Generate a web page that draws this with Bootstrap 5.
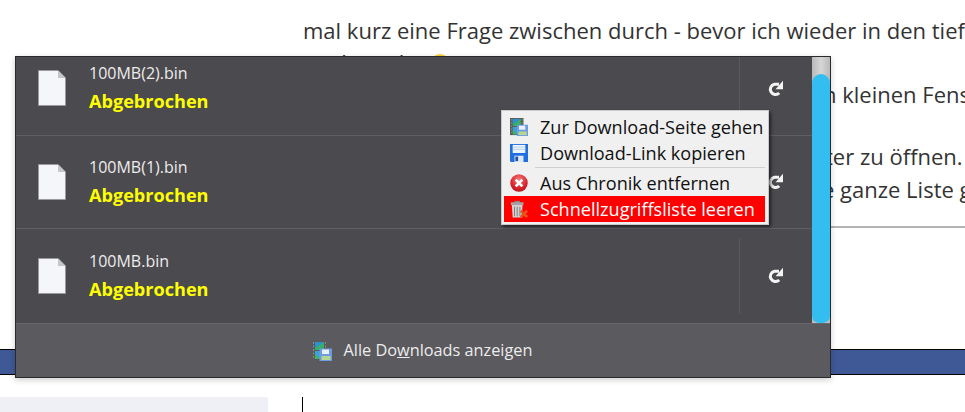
<!DOCTYPE html>
<html lang="de">
<head>
  <meta charset="UTF-8">
  <meta name="viewport" content="width=device-width, initial-scale=1.0">
  <title>Downloads</title>
  <link href="https://cdn.jsdelivr.net/npm/bootstrap@5.3.0/dist/css/bootstrap.min.css" rel="stylesheet">
  <style>
    body { width: 965px; height: 412px; overflow: hidden; background: #fff; position: relative; font-family: "Open Sans", sans-serif; }

    /* page behind the popup */
    .page-top { height: 349px; padding-left: 303px; overflow: hidden; }
    .post-line { font-size: 22px; color: #333; white-space: nowrap; line-height: 28px; margin: 0; }
    .post-line.first { padding-top: 16px; }
    .post-line.second { padding-top: 4px; padding-left: 26px; }
    .post-line.third { padding-top: 4px; padding-left: 520px; }
    .post-line.fourth { padding-top: 34px; padding-left: 522px; }
    .post-line.fifth { padding-top: 5px; padding-left: 519px; }
    .post-rule { height: 2px; background: #b5b5b5; margin: 23px 0 0 0; }
    .smiley { display: inline-block; width: 20px; height: 20px; border-radius: 50%; background: #f7d33d; vertical-align: -3px; }
    .blue-bar { height: 26px; background: #3f5896; border-top: 1px solid #000; border-bottom: 1px solid #000; }
    .page-bottom { height: 37px; padding-top: 22px; }
    .side-box { width: 268px; height: 15px; background: #eff0f6; border-radius: 0 2px 0 0; }
    .caret-line { width: 1px; height: 15px; background: #000; margin-left: 34px; }

    /* download popup */
    .dl-panel { position: absolute; left: 15px; top: 56px; width: 816px; height: 322px; background: #4b4a4f; border: 1px solid #2b2b2e; box-shadow: 0 2px 6px rgba(0,0,0,.2); font-family: "Open Sans", sans-serif; }
    .dl-list { height: 266px; }
    .dl-rows { width: 796px; }
    .dl-row { height: 93px; border-bottom: 1px solid #5f5e63; }
    .dl-row.r1 { height: 79px; }
    .dl-row.r3 { border-bottom: 0; padding-top: 1px; }
    .dl-file { width: 73px; padding: 28px 0 0 22px; }
    .r1 .dl-file { padding-top: 13px; }
    .dl-file svg { display: block; }
    .dl-text { padding-top: 21px; }
    .r1 .dl-text { padding-top: 6px; }
    .dl-name { color: #ececec; font-size: 16px; line-height: 20px; }
    .dl-state { color: #ffff00; font-weight: 700; font-size: 18.1px; line-height: 22px; margin-top: 7px; }
    .dl-retry { width: 73px; border-left: 1px solid #59585d; padding-right: 2px; }
    .r1 .dl-retry { padding-bottom: 14px; }
    .dl-scroll { width: 18px; background: linear-gradient(90deg, #b9b9b9, #d6d6d6 50%, #b9b9b9); padding-top: 17px; }
    .dl-thumb { height: 100%; background: #33bdf0; border-radius: 9px 9px 7px 7px; }
    .dl-foot { height: 54px; background: #5b5a5e; border-top: 1px solid #68676c; color: #ececec; font-size: 16.3px; gap: 12px; padding-right: 2px; }

    /* context menu */
    .ctx-menu { position: absolute; left: 501px; top: 110px; width: 268px; height: 115px; background: #f0f0f0; border: 1px solid #c9c9c9; box-shadow: 2px 2px 3px rgba(0,0,0,.55); padding: 3px 3px 3px 2px; font-family: "Open Sans", sans-serif; color: #111; }
    .ctx-item { height: 26px; font-size: 18.1px; padding-left: 6px; gap: 12px; white-space: nowrap; }
    .ctx-item svg { flex: none; }
    .ctx-item span { padding-top: 2px; }
    .ctx-item.hot { background: #ff0000; color: #fff; }
    .ctx-sep-wrap { height: 4px; padding-top: 1px; }
    .ctx-sep { height: 1px; background: #d0d0d0; margin-left: 31px; }
  </style>
</head>
<body>
  <svg width="0" height="0" class="d-block">
    <defs>
      <symbol id="doc-icon" viewBox="0 0 28 36"><path d="M.5.5H20L27.5 8V35.5H.5Z" fill="#f4f6f9" stroke="#9a9a9a"/><path d="M20 .5V8H27.5Z" fill="#c4c6c9"/></symbol>
      <symbol id="retry-icon" viewBox="0 0 18 18"><path d="M13 4.2H8.5A5.2 5.2 0 1 0 13.2 13" fill="none" stroke="#f4f4f4" stroke-width="3"/><path d="M17 .8V9.2H9.5Z" fill="#f4f4f4"/></symbol>
      <symbol id="film-icon" viewBox="0 0 20 20">
        <rect x="0" y="0" width="15" height="19" fill="#5a5a5a"/>
        <path d="M1.5 1V18M13.5 1V18" stroke="#8a8a8a" stroke-width="1" stroke-dasharray="2 1.5"/>
        <rect x="3" y="1" width="9" height="8" fill="#35b06a"/><path d="M3 1H12L3 7Z" fill="#2f8fd0"/>
        <rect x="3" y="10" width="9" height="8" fill="#3aa0d8"/><path d="M3 18H8L3 13Z" fill="#42b45a"/>
        <rect x="7.5" y="7.5" width="12.5" height="12.5" fill="#6f9be0"/><rect x="10" y="8.5" width="7" height="4.5" fill="#e8f0fb"/><rect x="9.5" y="15" width="9" height="4" fill="#b4d890"/>
      </symbol>
    </defs>
  </svg>

  <div class="page-top">
    <p class="post-line first">mal kurz eine Frage zwischen durch - bevor ich wieder in den tiefen</p>
    <p class="post-line second">abtauche <span class="smiley"></span></p>
    <p class="post-line third">n kleinen Fenster</p>
    <p class="post-line fourth">ter zu öffnen.</p>
    <p class="post-line fifth">e ganze Liste g</p>
    <div class="post-rule"></div>
  </div>
  <div class="blue-bar"></div>
  <div class="page-bottom d-flex">
    <div class="side-box"></div>
    <div class="caret-line"></div>
  </div>

  <div class="dl-panel d-flex flex-column">
    <div class="dl-list d-flex">
      <div class="dl-rows">
        <div class="dl-row r1 d-flex">
          <div class="dl-file"><svg width="28" height="36"><use href="#doc-icon"/></svg></div>
          <div class="dl-text flex-grow-1">
            <div class="dl-name">100MB(2).bin</div>
            <div class="dl-state">Abgebrochen</div>
          </div>
          <div class="dl-retry d-flex align-items-center justify-content-center"><svg width="18" height="18"><use href="#retry-icon"/></svg></div>
        </div>
        <div class="dl-row d-flex">
          <div class="dl-file"><svg width="28" height="36"><use href="#doc-icon"/></svg></div>
          <div class="dl-text flex-grow-1">
            <div class="dl-name">100MB(1).bin</div>
            <div class="dl-state">Abgebrochen</div>
          </div>
          <div class="dl-retry my-2 d-flex align-items-center justify-content-center"><svg width="18" height="18"><use href="#retry-icon"/></svg></div>
        </div>
        <div class="dl-row r3 d-flex">
          <div class="dl-file"><svg width="28" height="36"><use href="#doc-icon"/></svg></div>
          <div class="dl-text flex-grow-1">
            <div class="dl-name">100MB.bin</div>
            <div class="dl-state">Abgebrochen</div>
          </div>
          <div class="dl-retry my-2 d-flex align-items-center justify-content-center"><svg width="18" height="18"><use href="#retry-icon"/></svg></div>
        </div>
      </div>
      <div class="dl-scroll"><div class="dl-thumb"></div></div>
    </div>
    <div class="dl-foot d-flex align-items-center justify-content-center">
      <svg width="20" height="20"><use href="#film-icon"/></svg>
      <span>Alle Do<u>w</u>nloads anzeigen</span>
    </div>
  </div>

  <div class="ctx-menu">
    <div class="ctx-item d-flex align-items-center">
      <svg width="18" height="18"><use href="#film-icon"/></svg>
      <span>Zur Download-Seite gehen</span>
    </div>
    <div class="ctx-item d-flex align-items-center">
      <svg width="18" height="18" viewBox="0 0 20 20"><path d="M0 0H20V20H1L0 19Z" fill="#1f6fe0"/><rect x="3" y="1" width="14" height="9" fill="#eef4fc"/><path d="M3 3.5H17M3 6H17" stroke="#b8cdea"/><rect x="5" y="13" width="10" height="7" fill="#dce8f8"/><rect x="6" y="14" width="3" height="5" fill="#1f4fa0"/></svg>
      <span>Download-Link kopieren</span>
    </div>
    <div class="ctx-sep-wrap"><div class="ctx-sep"></div></div>
    <div class="ctx-item d-flex align-items-center">
      <svg width="18" height="18" viewBox="0 0 20 20"><defs><radialGradient id="red-ball" cx=".5" cy=".3" r=".8"><stop offset="0" stop-color="#f57a7a"/><stop offset=".6" stop-color="#d9222a"/><stop offset="1" stop-color="#a81218"/></radialGradient></defs><circle cx="10" cy="10" r="9.7" fill="url(#red-ball)"/><path d="M6.3 6.3L13.7 13.7M13.7 6.3L6.3 13.7" stroke="#fff" stroke-width="3"/></svg>
      <span>Aus Chronik entfernen</span>
    </div>
    <div class="ctx-item hot d-flex align-items-center">
      <svg width="18" height="18" viewBox="0 0 20 20"><path d="M5 1H11V3H5Z" fill="#888"/><rect x="1" y="2.5" width="14" height="3" fill="#a5a5a5"/><path d="M2 5.5H14L13 19.5H3Z" fill="#d2d2d2"/><path d="M5 7.5V18M8 7.5V18M11 7.5V18" stroke="#777"/><path d="M12 12L19 19M19 12L12 19" stroke="#e8501e" stroke-width="3"/></svg>
      <span>Schnellzugriffsliste leeren</span>
    </div>
  </div>
</body>
</html>
